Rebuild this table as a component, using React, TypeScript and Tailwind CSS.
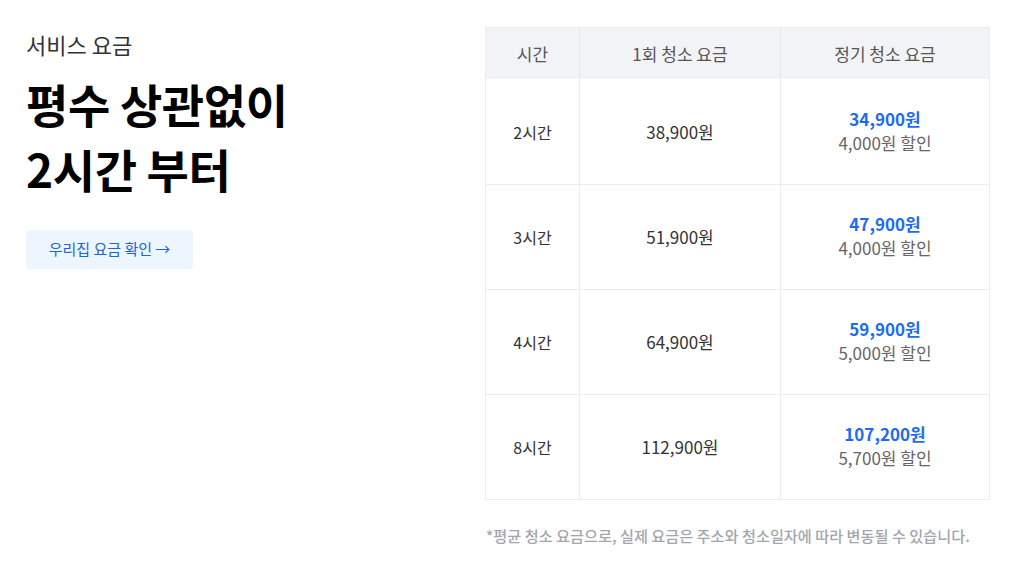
const rows = [
    { time: '2시간', once: '38,900원', regular: '34,900원', discount: '4,000원 할인' },
    { time: '3시간', once: '51,900원', regular: '47,900원', discount: '4,000원 할인' },
    { time: '4시간', once: '64,900원', regular: '59,900원', discount: '5,000원 할인' },
    { time: '8시간', once: '112,900원', regular: '107,200원', discount: '5,700원 할인' },
];

export default function App() {
    return (
        <div
            className="flex h-[576px] w-[1024px] bg-white pl-[26px] pr-[34px] pt-[27px]"
            style={{ fontFamily: '"Noto Sans CJK KR", "Noto Sans", sans-serif' }}
        >
            <div className="flex-1">
                <p className="mt-[3px] text-[22px] leading-[28px] text-[#333]">서비스 요금</p>
                <h1 className="mt-[13px] text-[46px] font-bold leading-[65px] tracking-[-0.4px] text-black">
                    평수 상관없이
                    <br />
                    2시간 부터
                </h1>
                <button className="mt-[29px] flex h-[39px] w-[167px] items-center justify-center rounded-[4px] bg-[#edf5ff] text-[15px] text-[#1b64da]">
                    우리집 요금 확인 →
                </button>
            </div>
            <div className="w-[505px]">
                <div className="border border-[#ececef]">
                    <div className="grid h-[51px] grid-cols-[94px_201px_1fr] bg-[#f2f3f7] text-[17px] text-[#555]">
                        <div className="flex items-center justify-center border-r border-[#e6e7eb]">시간</div>
                        <div className="flex items-center justify-center border-r border-[#e6e7eb]">1회 청소 요금</div>
                        <div className="flex items-center justify-center">정기 청소 요금</div>
                    </div>
                    {rows.map((r, i) => (
                        <div
                            key={r.time}
                            className={`grid h-[105px] grid-cols-[94px_201px_1fr] text-[#333] ${i > 0 ? 'border-t border-[#ececef]' : ''}`}
                        >
                            <div className="flex items-center justify-center border-r border-[#ececef] text-[16px]">{r.time}</div>
                            <div className="flex items-center justify-center border-r border-[#ececef] text-[17px]">{r.once}</div>
                            <div className="flex flex-col items-center justify-center pb-[2px]">
                                <span className="text-[17px] font-bold leading-[24px] text-[#1b6cf2]">{r.regular}</span>
                                <span className="text-[17px] leading-[24px] text-[#666]">{r.discount}</span>
                            </div>
                        </div>
                    ))}
                </div>
                <p className="mt-[24px] pl-[1px] text-[15.2px] font-medium text-[#a3a6ad]">
                    *평균 청소 요금으로, 실제 요금은 주소와 청소일자에 따라 변동될 수 있습니다.
                </p>
            </div>
        </div>
    );
}
